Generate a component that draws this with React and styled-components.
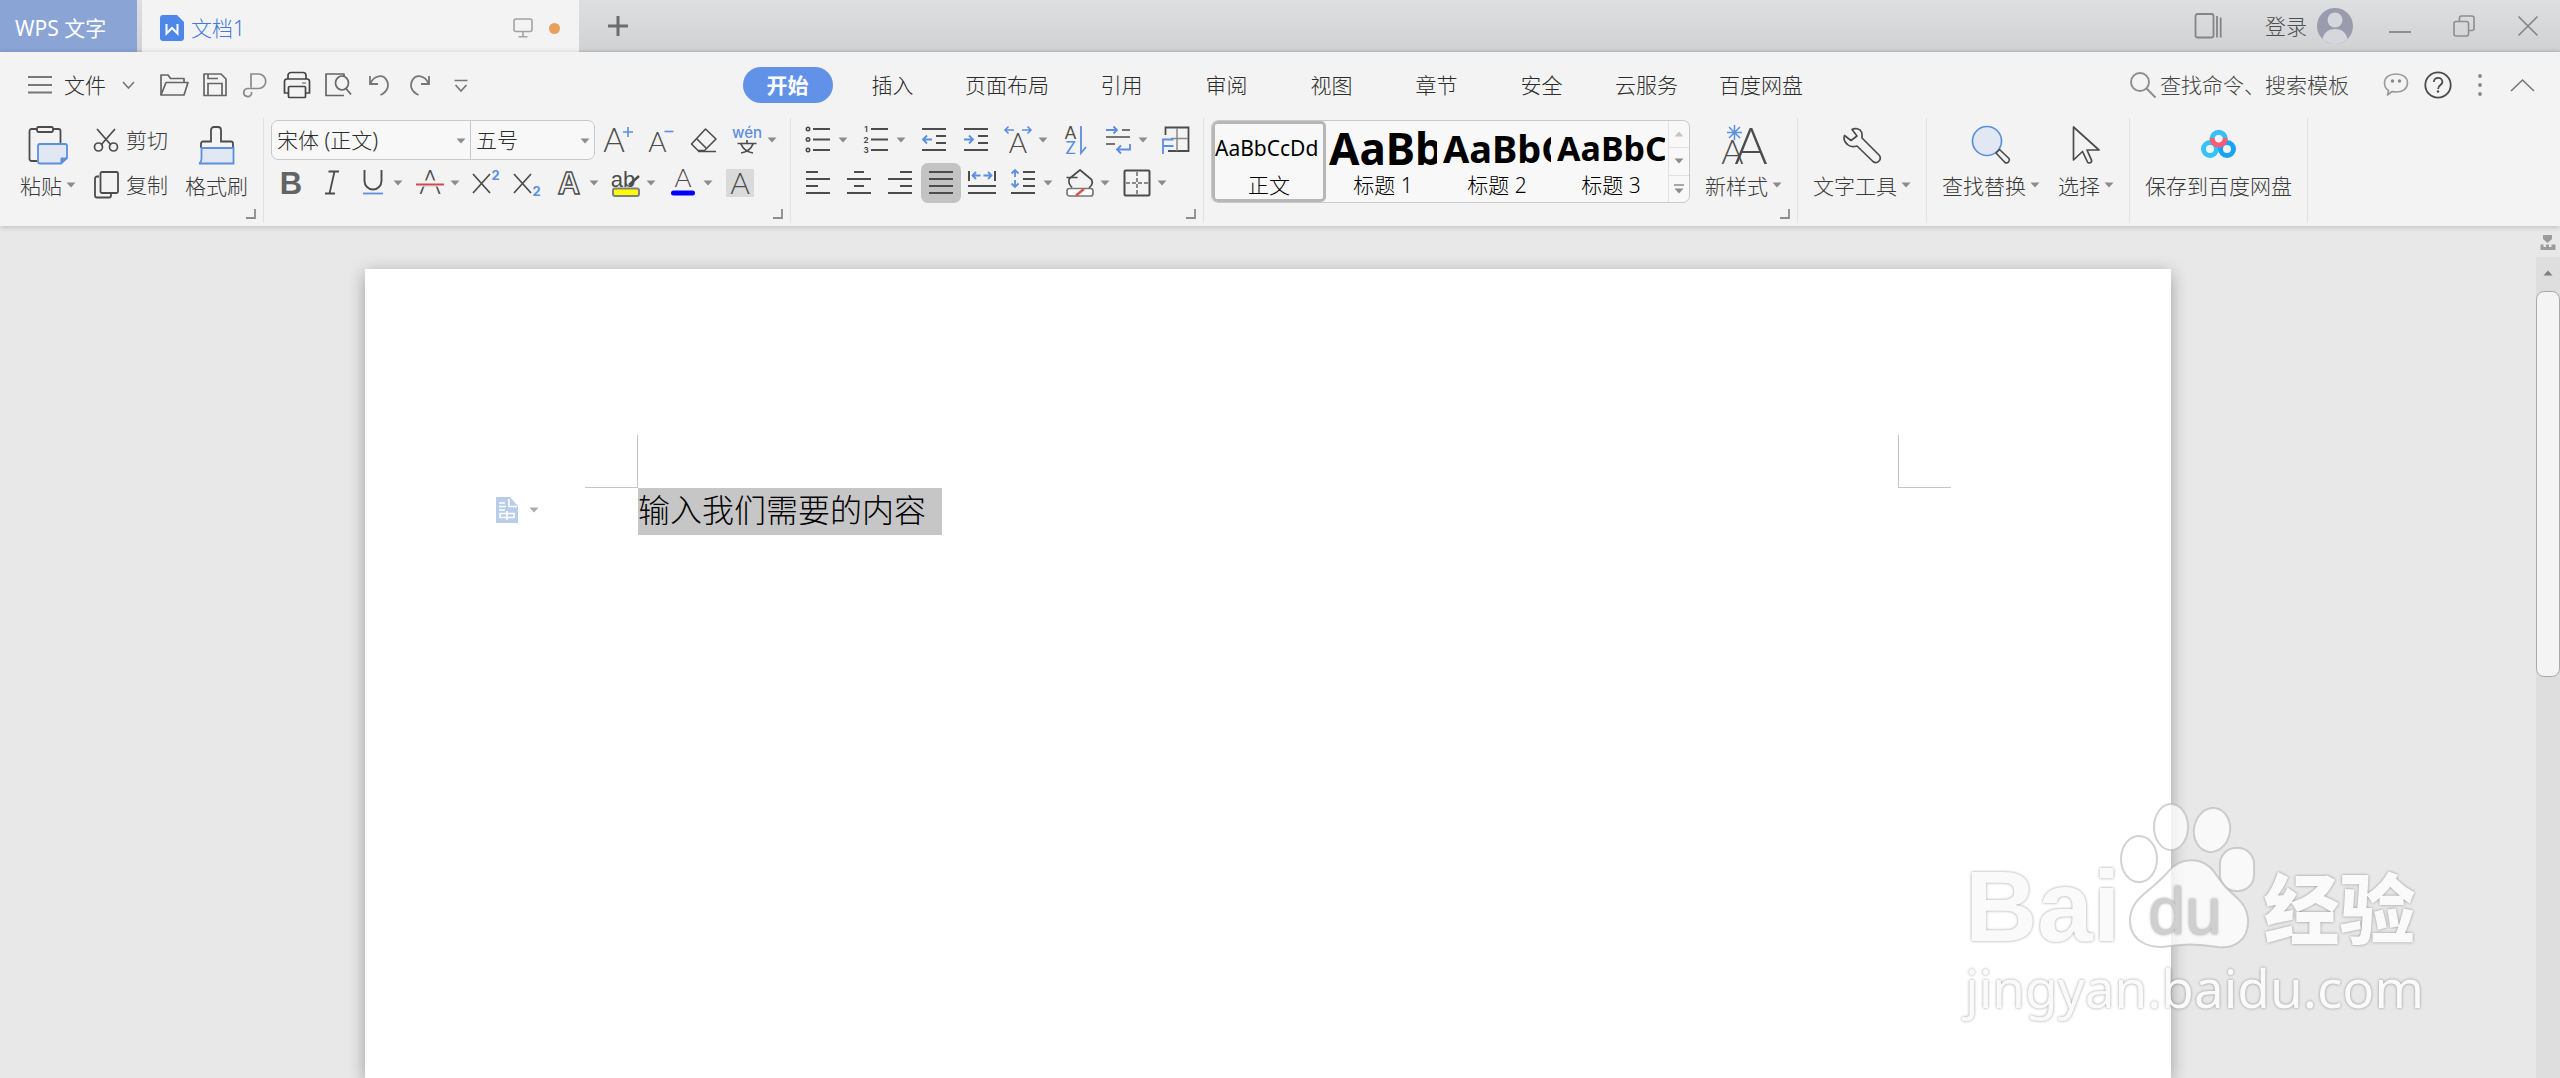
import React, { useState } from "react";
import styled, { createGlobalStyle } from "styled-components";

const ink = "#4c4c4c";
const blue = "#5b8fdf";
const gray = "#8c8c8c";

/* ---------- icons ---------- */

const Icon = ({ w = 28, h = 28, color = ink, sw = 2, children }) => (
    <svg
        width={w}
        height={h}
        viewBox={`0 0 ${w} ${h}`}
        fill="none"
        stroke={color}
        strokeWidth={sw}
        aria-hidden="true"
    >
        {children}
    </svg>
);

const Glyph = ({ x, y, size, fill = ink, weight = 300, family = "Lato", ...rest }) => (
    <text
        x={x}
        y={y}
        fontSize={size}
        fill={fill}
        stroke="none"
        fontWeight={weight}
        fontFamily={`"${family}", "Noto Sans CJK SC", sans-serif`}
        textAnchor="middle"
        {...rest}
    />
);

const Caret = ({ up, color = gray }) => (
    <svg width="10" height="6" viewBox="0 0 10 6" aria-hidden="true">
        <path d={up ? "M0.5 5.5h9L5 0.5z" : "M0.5 0.5h9L5 5.5z"} fill={color} />
    </svg>
);

const DocLogo = () => (
    <svg width="24" height="26" viewBox="0 0 24 26" aria-hidden="true">
        <path d="M3 0h14l7 7v16a3 3 0 0 1-3 3H3a3 3 0 0 1-3-3V3a3 3 0 0 1 3-3z" fill="#4f87e8" />
        <path d="M6.5 9v9.500L12 13l5.500 5.500V9" fill="none" stroke="#fff" strokeWidth="2" />
    </svg>
);

const MonitorIcon = () => (
    <Icon w={20} h={20} color="#a3a3a3" sw={1.6}>
        <rect x="1" y="1" width="18" height="12.500" rx="2" />
        <path d="M10 14v4.500M5.500 18.700h9" />
    </Icon>
);

const PlusIcon = () => (
    <Icon w={22} h={22} color="#6c6c6c" sw={3}>
        <path d="M11 1v20M1 11h20" />
    </Icon>
);

const SidebarIcon = () => (
    <Icon w={28} h={26} color="#858585" sw={1.8}>
        <rect x="1.500" y="1" width="18" height="23.500" rx="2" />
        <path d="M23 3v21.500M26.700 4.500v20" />
    </Icon>
);

const Avatar = () => (
    <svg width="36" height="36" viewBox="0 0 36 36" aria-hidden="true">
        <circle cx="18" cy="18" r="18" fill="#9a9bac" />
        <circle cx="18" cy="12" r="7.500" fill="#d6d7dc" />
        <path d="M5.500 31C7 24 12 21 18 21s11 3 12.500 10A18 18 0 0 1 5.500 31z" fill="#d6d7dc" />
    </svg>
);

const MinimizeIcon = () => (
    <Icon w={22} h={22} color="#8e8e8e">
        <path d="M0 17h22" />
    </Icon>
);

const RestoreIcon = () => (
    <Icon w={22} h={22} color="#8e8e8e" sw={1.6}>
        <rect x="1" y="6.500" width="14.500" height="14.500" rx="2" />
        <path d="M6.500 6.500V3a2 2 0 0 1 2-2H19a2 2 0 0 1 2 2v10.500a2 2 0 0 1-2 2h-3" />
    </Icon>
);

const CloseIcon = () => (
    <Icon w={20} h={20} color="#858585" sw={1.700}>
        <path d="M0.500 0.500l19 19M19.500 0.500l-19 19" />
    </Icon>
);

const MenuIcon = () => (
    <Icon w={24} h={18} color="#777" sw={1.800}>
        <path d="M0 1h24M0 9h24M0 16.500h24" />
    </Icon>
);

const ChevronIcon = ({ w = 13, h = 8, up }) => (
    <Icon w={w} h={h} color="#777" sw={1.600}>
        <path d={up ? `M1 ${h - 1}L${w / 2} 1L${w - 1} ${h - 1}` : `M1 1L${w / 2} ${h - 1}L${w - 1} 1`} />
    </Icon>
);

const OpenIcon = () => (
    <Icon color="#666" sw={1.700}>
        <path d="M1 24V4h7l2.500 3.500H24v4" strokeLinejoin="round" />
        <path d="M1 24L6 11.500h22L24 24z" strokeLinejoin="round" />
    </Icon>
);

const SaveIcon = () => (
    <Icon color="#666" sw={1.700}>
        <path d="M3 3h17l5 5v16.500H3z" strokeLinejoin="round" />
        <path d="M7 24V12.500h14V24M7 3v4.500h10" />
    </Icon>
);

const ExportIcon = () => (
    <Icon color="#8a8a8a" sw={1.700}>
        <path d="M9 16.500V3h7.500a7 7 0 0 1 0 14.500H5.500a4 4 0 1 0 4 5.500v-2" />
    </Icon>
);

const PrintIcon = () => (
    <Icon color="#444" sw={1.700}>
        <path d="M5 8V4.500a3 3 0 0 1 3-3h12a3 3 0 0 1 3 3V8" />
        <path d="M5 22H1.500V10.500a2.500 2.500 0 0 1 2.500-2.500h20a2.500 2.500 0 0 1 2.500 2.500V22H23" />
        <rect x="5.500" y="15.500" width="17" height="11" rx="1" />
        <path d="M19 12h4" stroke="#999" />
    </Icon>
);

const PreviewIcon = () => (
    <Icon color="#666" sw={1.700}>
        <path d="M20 6V3H2v21.500h18" strokeLinejoin="round" />
        <ellipse cx="18" cy="12" rx="6.500" ry="7" />
        <path d="M22 17.500l5 6" />
    </Icon>
);

const UndoIcon = ({ flip }) => (
    <Icon w={24} color="#777" sw={1.800}>
        <path
            d={
                flip
                    ? "M21 5v8h-8M20.500 12.500C17 4 8 3 4.500 9s-.5 12 6 15"
                    : "M3 5v8h8M3.500 12.500C7 4 16 3 19.500 9s.5 12-6 15"
            }
        />
    </Icon>
);

const MoreDownIcon = () => (
    <Icon w={14} h={14} color="#777" sw={1.700}>
        <path d="M0.500 2.500h13M1.500 7L7 13l5.500-6" />
    </Icon>
);

const SearchIcon = () => (
    <Icon w={26} h={28} color="#8c8c8c" sw={1.900}>
        <circle cx="10" cy="11" r="9" />
        <path d="M16.500 17.500l9 9" />
    </Icon>
);

const ChatIcon = () => (
    <Icon w={26} h={26} color="#999" sw={1.600}>
        <path
            d="M5.500 18.500C2.500 16.500 1.500 14 1.500 11 1.500 5.500 6 2 13 2s11.500 3.500 11.500 9-4.500 9-11.500 9c-1.500 0-3-.2-4-.5L4.500 23z"
            strokeLinejoin="round"
        />
        <circle cx="9.500" cy="9" r="1.700" fill="#888" stroke="none" />
        <circle cx="16.500" cy="9" r="1.700" fill="#888" stroke="none" />
    </Icon>
);

const HelpIcon = () => (
    <Icon color="#4a4a4a" sw={1.800}>
        <circle cx="14" cy="14" r="12.700" />
        <path d="M9.800 11c0-5.500 8.600-5.500 8.600 0 0 3.200-4.300 3-4.300 7" />
        <circle cx="14" cy="20.500" r="1.200" fill="#4a4a4a" stroke="none" />
    </Icon>
);

const DotsIcon = () => (
    <Icon w={6} h={24} color="none">
        <g fill="#888">
            <circle cx="3" cy="3" r="1.900" />
            <circle cx="3" cy="12" r="1.900" />
            <circle cx="3" cy="21" r="1.900" />
        </g>
    </Icon>
);

const PasteIcon = () => (
    <Icon w={40} h={40} sw={1.800}>
        <path d="M9 36H3.500a2 2 0 0 1-2-2V6a2 2 0 0 1 2-2H9M25 4h5.500a2 2 0 0 1 2 2v12" />
        <rect x="9" y="2" width="16" height="5" rx="1.500" />
        <path d="M12 19h25a2 2 0 0 1 2 2v12l-6 5.500H12a2 2 0 0 1-2-2V21a2 2 0 0 1 2-2z" fill="#e1e8f4" stroke={blue} />
        <path d="M33 38.500V33h6z" fill={blue} stroke={blue} strokeWidth="1" />
    </Icon>
);

const CutIcon = () => (
    <Icon w={26} h={26} sw={1.700}>
        <path d="M4 2l14 16M22 2L8 18" />
        <circle cx="5.500" cy="20" r="4" />
        <circle cx="20.500" cy="20" r="4" />
    </Icon>
);

const CopyIcon = () => (
    <Icon w={26} h={28} sw={1.800}>
        <rect x="7.500" y="1" width="17.500" height="21" rx="1.500" />
        <path d="M6 5.500H4a2 2 0 0 0-2 2V24.500a2 2 0 0 0 2 2h12a2 2 0 0 0 2-2V23" />
    </Icon>
);

const PainterIcon = () => (
    <Icon w={40} h={40} sw={1.800}>
        <path d="M4 23v-4.500a2 2 0 0 1 2-2h8V5a3 3 0 0 1 3-3h4a3 3 0 0 1 3 3v11.500h10a2 2 0 0 1 2 2V23" />
        <path d="M4.500 23h32v15.500H2c2.500-1 2.500-3 2.500-6z" fill="#e1e8f4" stroke={blue} />
    </Icon>
);

const GrowIcon = () => (
    <Icon w={30}>
        <Glyph x="11" y="26" size="33">A</Glyph>
        <path d="M25 1v10M20 6h10" stroke={blue} strokeWidth="1.600" />
    </Icon>
);

const ShrinkIcon = () => (
    <Icon w={26}>
        <Glyph x="9.500" y="26" size="28">A</Glyph>
        <path d="M16.500 5.500h9" stroke={blue} strokeWidth="1.600" />
    </Icon>
);

const EraserIcon = () => (
    <Icon sw={1.600}>
        <path d="M15.500 3L26 13 14.500 24.500H8L1.500 18z" strokeLinejoin="round" />
        <path d="M6.500 12.500L16 22M8 25.500h18" />
    </Icon>
);

const PinyinIcon = () => (
    <Icon w={30} h={30}>
        <Glyph x="15" y="13" size="15" fill={blue} weight={500} family="Inter">wén</Glyph>
        <path d="M5.500 18.500h19M15 15v3M9 19c2 5 6 8 12 9M21 19c-2 5-6 8-12 9" strokeWidth="1.700" />
    </Icon>
);

const BoldIcon = () => (
    <Icon>
        <Glyph x="14" y="25" size="31" weight={900} fill="#636363" family="Liberation Sans">B</Glyph>
    </Icon>
);

const ItalicIcon = () => (
    <Icon sw={1.800}>
        <path d="M10.500 2.500h10.500M7 24.500h10M16.500 2.500L11.500 24.500" />
    </Icon>
);

const UnderlineIcon = () => (
    <Icon sw={1.900}>
        <path d="M5.500 1v11a8.500 8.500 0 0 0 17 0V1" />
        <path d="M4 24.500h20" stroke={blue} strokeWidth="1.800" />
    </Icon>
);

const StrikeIcon = () => (
    <Icon>
        <Glyph x="14" y="25" size="33">A</Glyph>
        <path d="M0 14.500h28" stroke="#f3f3f3" strokeWidth="6" />
        <path d="M0 15.500h28" stroke="#cf4a4f" />
    </Icon>
);

const ScriptIcon = ({ sub }) => (
    <Icon sw={1.700}>
        <path d="M0 5l17 19M17 5L0 24" />
        <Glyph x="22.500" y={sub ? 27 : 11} size="13" fill={blue} weight={700} family="Inter">2</Glyph>
    </Icon>
);

const EffectIcon = () => (
    <Icon>
        <Glyph x="14" y="25" size="31" weight={700} family="Liberation Sans" fill="#f3f3f3" stroke={ink} strokeWidth="1.400">
            A
        </Glyph>
    </Icon>
);

const HighlightIcon = () => (
    <Icon w={30} h={30}>
        <Glyph x="12" y="19" size="22" weight={400} family="Liberation Sans">ab</Glyph>
        <path d="M18 17l10-9M19 17l3-4" strokeWidth="2.400" />
        <rect x="2" y="20.500" width="26" height="7.500" rx="2" fill="#ffff00" stroke="#808080" />
    </Icon>
);

const ColorIcon = () => (
    <Icon w={28} h={30}>
        <Glyph x="14" y="19" size="26">A</Glyph>
        <path d="M4.500 25h19" stroke="#0000ff" strokeWidth="5" strokeLinecap="round" />
    </Icon>
);

const ShadeIcon = () => (
    <Icon>
        <rect width="28" height="28" rx="1" fill="#dadada" stroke="none" />
        <Glyph x="14" y="25" size="30">A</Glyph>
    </Icon>
);

const BulletsIcon = () => (
    <Icon>
        <path d="M9 3h17M9 13.500h17M9 24h17" />
        <g strokeWidth="1.600">
            <circle cx="4" cy="3" r="1.700" />
            <circle cx="4" cy="13.500" r="1.700" />
            <circle cx="4" cy="24" r="1.700" />
        </g>
    </Icon>
);

const NumbersIcon = () => (
    <Icon>
        <path d="M9 3h17M9 13.500h17M9 24h17" />
        <Glyph x="4" y="6" size="8" weight={700} family="Inter">1</Glyph>
        <Glyph x="4" y="16.500" size="8" weight={700} family="Inter">2</Glyph>
        <Glyph x="4" y="27" size="8" weight={700} family="Inter">3</Glyph>
    </Icon>
);

const IndentIcon = ({ out }) => (
    <Icon>
        <path d="M2 3h24M16 10h10M16 17h10M2 24h24" />
        <path d={out ? "M3 13.500h9M7 9.500l-4 4 4 4" : "M2 13.500h9M7 9.500l4 4-4 4"} stroke={blue} strokeWidth="1.800" />
    </Icon>
);

const ScaleIcon = () => (
    <Icon>
        <Glyph x="14" y="27" size="28">A</Glyph>
        <path d="M1 4h9M4.500 0.500L1 4l3.500 3.500M18 4h9M23.500 0.500L27 4l-3.500 3.500" stroke={blue} strokeWidth="1.600" />
    </Icon>
);

const SortIcon = () => (
    <Icon>
        <Glyph x="8.500" y="13" size="17" weight={400}>A</Glyph>
        <Glyph x="8.500" y="27.500" size="17" weight={400} fill={blue}>Z</Glyph>
        <path d="M19 0v27l5-6" stroke={blue} strokeWidth="1.800" />
    </Icon>
);

const WrapIcon = () => (
    <Icon sw={1.600}>
        <path d="M18 4h8M2 11h24M2 18h9" />
        <path d="M2 4h11M9.500 0.500L13 4l-3.500 3.500M26 18v5.500H13M17 19.500l-4 4 4 4" stroke={blue} strokeWidth="1.800" />
    </Icon>
);

const TableIcon = () => (
    <Icon sw={1.800}>
        <path d="M3.500 9V1.500h23v23.500H6" />
        <path d="M15 2v23M9 12.500h17" stroke="#888" strokeWidth="1.500" />
        <path d="M1 28V13.500h10.500M1 20h10.500" stroke={blue} />
    </Icon>
);

const AlignIcon = ({ lines }) => (
    <Icon>
        <path d={lines.map(([from, to], i) => `M${from} ${3 + i * 7}H${to}`).join("")} />
    </Icon>
);

const DistributeIcon = () => (
    <Icon>
        <path d="M1 2v10M27 2v10M0 17h28M0 24h28" />
        <path d="M4.500 6.500h8M8 3L4.500 6.500 8 10M15.500 6.500h8M20 3l3.500 3.500L20 10" stroke={blue} strokeWidth="1.800" />
    </Icon>
);

const SpacingIcon = () => (
    <Icon>
        <path d="M14 3h12M14 10h12M14 17h12M2 24h24" />
        <path d="M6 1v7M2.500 4.500L6 1l3.500 3.500M6 11v7M2.500 14.500L6 18l3.500-3.500" stroke={blue} strokeWidth="1.800" />
    </Icon>
);

const BucketIcon = () => (
    <Icon sw={1.700}>
        <path d="M0.500 8.500h11M6 18.500c-3-3-4-6-2.500-9L14 1l11.500 9.500c1.500 3 .5 6-2.500 8.500" strokeLinejoin="round" />
        <rect x="1" y="19.500" width="26" height="7.500" rx="2.500" fill="#fff" stroke="#777" />
        <path d="M10 26.500l8-6.500" stroke="#d9534f" strokeWidth="2.400" />
    </Icon>
);

const BorderIcon = () => (
    <Icon>
        <rect x="1.500" y="1.500" width="25" height="25" rx="1" />
        <path d="M14 3v22M3 14h22" stroke="#8a8a8a" strokeDasharray="4 2" />
    </Icon>
);

const NewStyleIcon = () => (
    <Icon w={44} h={40}>
        <Glyph x="10.500" y="39" size="34">A</Glyph>
        <Glyph x="29" y="39" size="51">A</Glyph>
        <path
            d="M12.500 0v15M5 7.500h15M7 2l11 11M18 2L7 13"
            stroke={blue}
            strokeWidth="1.500"
        />
    </Icon>
);

const WrenchIcon = () => (
    <Icon w={40} h={40} sw={1.700}>
        <path
            d="M10 4.500c3-1.800 8-1 9.500 2.500 1 2.500.5 4 .5 6l17 17c3.500 4-1.500 10-6 6.500L15 21c-3 1-7 1-9.500-1.500C1.500 16 1.500 13 2.500 10.500l6.500 5 6-4.500z"
            strokeLinejoin="round"
        />
    </Icon>
);

const FindIcon = () => (
    <Icon w={40} h={40} sw={1.700}>
        <circle cx="16" cy="16" r="14.500" fill="#e1e8f4" stroke={blue} />
        <path d="M25 28l3.500-3.500L38 33.500c1.500 2.500-1.500 5.500-4 4z" strokeLinejoin="round" />
    </Icon>
);

const CursorIcon = () => (
    <Icon w={30} h={40} sw={1.700}>
        <path
            d="M2.500 2v33l9-8.500 5 10.500c1 2 5 .5 4-1.800L16 25h12z"
            strokeLinejoin="round"
        />
    </Icon>
);

const NetdiskIcon = () => (
    <Icon w={38} h={40} sw={5}>
        <circle cx="10" cy="24" r="6.500" stroke="#35c3f6" />
        <circle cx="27" cy="24" r="6.500" stroke="#16a4f8" />
        <path d="M12 14a6.700 6.700 0 0 1 13.400 0" stroke="#36c0f5" />
        <path d="M12 13a6.700 7 0 0 0 13.400 0" stroke="#fb5c76" />
    </Icon>
);

const LauncherIcon = () => (
    <Icon w={10} h={10} color={gray} sw={1.800}>
        <path d="M9 0v9H0" />
    </Icon>
);

const PasteHintIcon = () => (
    <svg width="22" height="26" viewBox="0 0 22 26" aria-hidden="true">
        <path d="M0 0h14l8 9v17H0z" fill="#b9cdea" />
        <path d="M13 2v7.500h8M3 6h6M3 9.500h7M3 13h6M4 16.500h14v4H4zM11 14v9" fill="none" stroke="#fff" strokeWidth="1.600" />
    </svg>
);

const RulerIcon = () => (
    <svg width="16" height="16" viewBox="0 0 16 16" aria-hidden="true">
        <path d="M3 0h9v4L7.500 8 3 4z" fill="#9c9c9c" />
        <path d="M0.500 9.500h3v2.500h2.500V9.500h3v2.500h2.500V9.500h4V15h-15z" fill="#9c9c9c" />
    </svg>
);

/* ---------- data ---------- */

const quickTools = [
    ["打开", <OpenIcon />],
    ["保存", <SaveIcon />],
    ["输出为PDF", <ExportIcon />],
    ["打印", <PrintIcon />],
    ["打印预览", <PreviewIcon />],
    ["撤销", <UndoIcon />],
    ["恢复", <UndoIcon flip />],
    ["自定义快速访问工具栏", <MoreDownIcon />],
];

const tabs = ["开始", "插入", "页面布局", "引用", "审阅", "视图", "章节", "安全", "云服务", "百度网盘"];

const fontSizeTools = [
    ["增大字号", <GrowIcon />],
    ["减小字号", <ShrinkIcon />],
    ["清除格式", <EraserIcon />],
    ["拼音指南", <PinyinIcon />, true],
];

const fontTools = [
    ["加粗", <BoldIcon />],
    ["倾斜", <ItalicIcon />],
    ["下划线", <UnderlineIcon />, true],
    ["删除线", <StrikeIcon />, true],
    ["上标", <ScriptIcon />],
    ["下标", <ScriptIcon sub />],
    ["文字效果", <EffectIcon />, true],
    ["突出显示", <HighlightIcon />, true],
    ["字体颜色", <ColorIcon />, true],
    ["字符底纹", <ShadeIcon />],
];

const listTools = [
    ["项目符号", <BulletsIcon />, true],
    ["编号", <NumbersIcon />, true],
    ["减少缩进量", <IndentIcon out />],
    ["增加缩进量", <IndentIcon />],
    ["中文版式", <ScaleIcon />, true],
    ["排序", <SortIcon />],
    ["显示编辑标记", <WrapIcon />, true],
    ["制表位", <TableIcon />],
];

const alignTools = [
    ["左对齐", <AlignIcon lines={[[2, 14], [2, 26], [2, 14], [2, 26]]} />],
    ["居中", <AlignIcon lines={[[9, 19], [2, 26], [9, 19], [2, 26]]} />],
    ["右对齐", <AlignIcon lines={[[14, 26], [2, 26], [14, 26], [2, 26]]} />],
    ["两端对齐", <AlignIcon lines={[[2, 26], [2, 26], [2, 26], [2, 26]]} />, false, true],
    ["分散对齐", <DistributeIcon />],
    ["行距", <SpacingIcon />, true],
    ["底纹颜色", <BucketIcon />, true],
    ["边框", <BorderIcon />, true],
];

const styleSamples = [
    { name: "正文", sample: "AaBbCcDd", size: 21 },
    { name: "标题 1", sample: "AaBb", size: 44, bold: true },
    { name: "标题 2", sample: "AaBbC", size: 38, bold: true },
    { name: "标题 3", sample: "AaBbC", size: 34, bold: true },
];

/* ---------- components ---------- */

function ToolRow({ tools, gap }) {
    return (
        <Row $gap={gap}>
            {tools.map(([name, icon, hasMenu, active]) => (
                <Tool key={name} aria-label={name} $active={active}>
                    <ToolIcon>{icon}</ToolIcon>
                    {hasMenu && (
                        <ToolMenu>
                            <Caret />
                        </ToolMenu>
                    )}
                </Tool>
            ))}
        </Row>
    );
}

function BigTool({ icon, label, hasMenu }) {
    return (
        <BigButton>
            {icon}
            <BigLabel>
                {label}
                {hasMenu && <Caret />}
            </BigLabel>
        </BigButton>
    );
}

function TitleBar() {
    return (
        <Title>
            <HomeTab>WPS 文字</HomeTab>
            <DocTab>
                <DocLogo />
                <DocName>文档1</DocName>
                <MonitorIcon />
                <UnsavedDot />
            </DocTab>
            <NewTab aria-label="新建">
                <PlusIcon />
            </NewTab>
            <WindowTools>
                <IconButton aria-label="侧栏">
                    <SidebarIcon />
                </IconButton>
                <Login>
                    登录
                    <Avatar />
                </Login>
                <WindowButton aria-label="最小化">
                    <MinimizeIcon />
                </WindowButton>
                <WindowButton aria-label="还原">
                    <RestoreIcon />
                </WindowButton>
                <WindowButton aria-label="关闭">
                    <CloseIcon />
                </WindowButton>
            </WindowTools>
        </Title>
    );
}

function MenuBar() {
    const [activeTab, setActiveTab] = useState("开始");

    return (
        <Menu>
            <Quick>
                <FileButton>
                    <MenuIcon />
                    <span>文件</span>
                    <ChevronIcon />
                </FileButton>
                <Row $gap={1}>
                    {quickTools.map(([name, icon]) => (
                        <IconButton key={name} aria-label={name}>
                            {icon}
                        </IconButton>
                    ))}
                </Row>
            </Quick>
            <Tabs>
                {tabs.map((tab) => (
                    <TabSlot key={tab} $wide={tab.length > 3}>
                        <Tab $active={tab === activeTab} onClick={() => setActiveTab(tab)}>
                            {tab}
                        </Tab>
                    </TabSlot>
                ))}
            </Tabs>
            <MenuRight>
                <Search>
                    <SearchIcon />
                    <input type="text" aria-label="查找" placeholder="查找命令、搜索模板" />
                </Search>
                <Row $gap={2}>
                    <IconButton aria-label="反馈">
                        <ChatIcon />
                    </IconButton>
                    <IconButton aria-label="帮助">
                        <HelpIcon />
                    </IconButton>
                    <IconButton aria-label="更多">
                        <DotsIcon />
                    </IconButton>
                    <IconButton aria-label="收起功能区">
                        <ChevronIcon w={25} h={13} up />
                    </IconButton>
                </Row>
            </MenuRight>
        </Menu>
    );
}

function Ribbon() {
    const [style, setStyle] = useState("正文");

    return (
        <RibbonBar>
            <Group $left={20} $right={15} $gap={17}>
                <BigTool icon={<PasteIcon />} label="粘贴" hasMenu />
                <Stack $gap={5}>
                    <SmallButton>
                        <CutIcon />
                        剪切
                    </SmallButton>
                    <SmallButton>
                        <CopyIcon />
                        复制
                    </SmallButton>
                </Stack>
                <BigTool icon={<PainterIcon />} label="格式刷" />
                <Launcher aria-label="剪贴板">
                    <LauncherIcon />
                </Launcher>
            </Group>

            <Group $left={7} $right={7}>
                <Stack $gap={3}>
                    <Row $gap={3}>
                        <Combo>
                            <Field $width={198}>
                                <select aria-label="字体" defaultValue="宋体 (正文)">
                                    <option>宋体 (正文)</option>
                                </select>
                                <Caret />
                            </Field>
                            <Field $width={124}>
                                <select aria-label="字号" defaultValue="五号">
                                    <option>五号</option>
                                </select>
                                <Caret />
                            </Field>
                        </Combo>
                        <ToolRow tools={fontSizeTools} gap={3} />
                    </Row>
                    <ToolRow tools={fontTools} gap={1} />
                </Stack>
                <Launcher aria-label="字体设置">
                    <LauncherIcon />
                </Launcher>
            </Group>

            <Group $left={7} $right={7}>
                <Stack $gap={3}>
                    <ToolRow tools={listTools} gap={2} />
                    <ToolRow tools={alignTools} gap={1} />
                </Stack>
                <Launcher aria-label="段落设置">
                    <LauncherIcon />
                </Launcher>
            </Group>

            <Group $left={7} $right={15} $gap={15}>
                <Gallery>
                    {styleSamples.map((item) => (
                        <StyleCard
                            key={item.name}
                            $active={item.name === style}
                            onClick={() => setStyle(item.name)}
                        >
                            <Sample $size={item.size} $bold={item.bold}>
                                {item.sample}
                            </Sample>
                            <StyleName>{item.name}</StyleName>
                        </StyleCard>
                    ))}
                    <GalleryScroll>
                        <button aria-label="上一行">
                            <Caret up color="#c4c4c4" />
                        </button>
                        <button aria-label="下一行">
                            <Caret />
                        </button>
                        <button aria-label="更多样式">
                            <Icon w={10} h={10} color={gray} sw={1.600}>
                                <path d="M0 1h10" />
                                <path d="M0.500 4.500h9L5 9.500z" fill={gray} stroke="none" />
                            </Icon>
                        </button>
                    </GalleryScroll>
                </Gallery>
                <BigTool icon={<NewStyleIcon />} label="新样式" hasMenu />
                <Launcher aria-label="样式设置">
                    <LauncherIcon />
                </Launcher>
            </Group>

            <Group $left={15} $right={15}>
                <BigTool icon={<WrenchIcon />} label="文字工具" hasMenu />
            </Group>

            <Group $left={15} $right={15} $gap={18}>
                <BigTool icon={<FindIcon />} label="查找替换" hasMenu />
                <BigTool icon={<CursorIcon />} label="选择" hasMenu />
            </Group>

            <Group $left={15} $right={15}>
                <BigTool icon={<NetdiskIcon />} label="保存到百度网盘" />
            </Group>
        </RibbonBar>
    );
}

function Watermark() {
    return (
        <Mark>
            <MarkRow>
                <MarkLatin>Bai</MarkLatin>
                <svg width="140" height="150" viewBox="0 0 140 150" aria-hidden="true">
                    <g fill="#fff" fillOpacity="0.75" stroke="#b4b4b4" strokeOpacity="0.6" strokeWidth="2">
                        <ellipse cx="18" cy="57" rx="18" ry="23" />
                        <ellipse cx="50" cy="25" rx="17" ry="23" />
                        <ellipse cx="91" cy="28" rx="18" ry="22" transform="rotate(10 91 28)" />
                        <rect x="99" y="46" width="34" height="43" rx="16" />
                        <path d="M46 71c13-17 36-17 48 0 8 11 10 14 20 23 8 7 13 14 13 26 0 18-14 27-30 25-17-3-30-4-48-1-20 4-40-5-40-25 0-13 6-20 14-27 10-9 15-12 23-21z" />
                    </g>
                    <Glyph x="64" y="132" size="66" weight={400} family="Liberation Sans" fill="#cfcfcf">
                        du
                    </Glyph>
                </svg>
                <MarkHan>经验</MarkHan>
            </MarkRow>
            <MarkUrl>jingyan.baidu.com</MarkUrl>
        </Mark>
    );
}

function App() {
    return (
        <Shell>
            <GlobalStyle />
            <TitleBar />
            <Chrome>
                <MenuBar />
                <Ribbon />
            </Chrome>
            <Workspace>
                <Canvas>
                    <Page>
                        <CropMarks>
                            <CropMark />
                            <CropMark $right />
                        </CropMarks>
                        <Line>
                            <PasteHint aria-label="粘贴选项">
                                <PasteHintIcon />
                                <Caret color="#ababab" />
                            </PasteHint>
                            <Selected>输入我们需要的内容</Selected>
                        </Line>
                    </Page>
                </Canvas>
                <ScrollBar>
                    <ScrollRuler>
                        <RulerIcon />
                    </ScrollRuler>
                    <ScrollUp aria-label="向上滚动">
                        <Caret up color="#808080" />
                    </ScrollUp>
                    <ScrollTrack>
                        <ScrollThumb />
                    </ScrollTrack>
                </ScrollBar>
                <Watermark />
            </Workspace>
        </Shell>
    );
}

/* ---------- styles ---------- */

const GlobalStyle = createGlobalStyle`
    * {
        box-sizing: border-box;
    }

    body {
        margin: 0;
        font-family: "Noto Sans", "Noto Sans CJK SC", sans-serif;
        font-size: 21px;
        font-weight: 300;
        line-height: 26px;
        color: #2c2c2c;
    }

    button, input, select {
        margin: 0;
        padding: 0;
        border: 0;
        background: none;
        font: inherit;
        color: inherit;
        white-space: nowrap;
    }

    svg {
        flex: none;
        display: block;
        overflow: visible;
    }
`;

const Shell = styled.div`
    display: flex;
    flex-direction: column;
    height: 100vh;
    overflow: hidden;
    background: #e8e8e8;
`;

const Title = styled.header`
    display: flex;
    flex: none;
    height: 52px;
    background: linear-gradient(#dedfe1, #d1d2d4 96%, #c0c1c3);
`;

const HomeTab = styled.button`
    width: 137px;
    margin-right: 5px;
    padding-left: 15px;
    padding-top: 4px;
    text-align: left;
    font-weight: 400;
    color: #fff;
    background: #8aa4d5;
`;

const DocTab = styled.div`
    display: flex;
    align-items: center;
    width: 437px;
    padding: 4px 19px 0 18px;
    background: #f3f3f3;
`;

const DocName = styled.span`
    flex: 1;
    margin-left: 7px;
    color: #4179e0;
`;

const UnsavedDot = styled.span`
    width: 11px;
    height: 11px;
    margin-left: 16px;
    border-radius: 50%;
    background: #e8a05a;
`;

const NewTab = styled.button`
    display: flex;
    align-items: center;
    justify-content: center;
    width: 78px;
`;

const WindowTools = styled.div`
    display: flex;
    align-items: center;
    margin-left: auto;
    color: #505050;
`;

const IconButton = styled.button`
    display: flex;
    align-items: center;
    justify-content: center;
    width: 40px;
    height: 40px;
`;

const Login = styled.button`
    display: flex;
    align-items: center;
    gap: 10px;
    margin: 0 15px 0 37px;
`;

const WindowButton = styled(IconButton)`
    width: 64px;
`;

const Chrome = styled.div`
    position: relative;
    flex: none;
    background: #f3f3f3;
    box-shadow: 0 1px 6px rgba(0, 0, 0, 0.2);
`;

const Menu = styled.div`
    display: flex;
    align-items: center;
    height: 66px;
`;

const Quick = styled.div`
    display: flex;
    align-items: center;
    gap: 19px;
    min-width: 735px;
    padding-left: 28px;
`;

const FileButton = styled.button`
    display: flex;
    align-items: center;

    span {
        margin: 0 16px 0 12px;
    }
`;

const Row = styled.div`
    display: flex;
    align-items: center;
    gap: ${(props) => props.$gap}px;
`;

const Stack = styled.div`
    display: flex;
    flex-direction: column;
    gap: ${(props) => props.$gap}px;
    padding-top: 2px;
`;

const Tabs = styled.nav`
    display: flex;
`;

const TabSlot = styled.div`
    display: flex;
    justify-content: center;
    width: ${(props) => (props.$wide ? 124 : 105)}px;
`;

const Tab = styled.button`
    height: 36px;
    padding: 0 ${(props) => (props.$active ? 24 : 8)}px;
    border-radius: 18px;
    font-weight: ${(props) => (props.$active ? 700 : 300)};
    color: ${(props) => (props.$active ? "#fff" : "inherit")};
    background: ${(props) => (props.$active ? "#6192e8" : "none")};
`;

const MenuRight = styled.div`
    display: flex;
    align-items: center;
    margin-left: auto;
    padding-right: 18px;
`;

const Search = styled.label`
    display: flex;
    align-items: center;
    gap: 4px;

    input {
        width: 216px;
        outline: none;
    }

    input::placeholder {
        color: #444;
        opacity: 1;
    }
`;

const RibbonBar = styled.div`
    display: flex;
    height: 108px;
    padding-bottom: 3px;
`;

const Group = styled.section`
    position: relative;
    display: flex;
    align-items: flex-start;
    gap: ${(props) => props.$gap || 0}px;
    padding-left: ${(props) => props.$left}px;
    padding-right: ${(props) => props.$right}px;
    border-right: 1px solid #e2e2e2;
`;

const Launcher = styled.button`
    position: absolute;
    right: 7px;
    bottom: 4px;
`;

const BigButton = styled.button`
    display: flex;
    flex-direction: column;
    align-items: center;
    gap: 8px;
    padding-top: 7px;
    color: #3a3a3a;
`;

const BigLabel = styled.span`
    display: flex;
    gap: 4px;

    svg {
        margin-top: 9px;
    }
`;

const SmallButton = styled.button`
    display: flex;
    align-items: center;
    gap: 7px;
    height: 40px;
    color: #3a3a3a;
`;

const Tool = styled.button`
    display: flex;
    align-items: center;
    height: 40px;
    border-radius: 7px;
    background: ${(props) => (props.$active ? "#c3c3c3" : "none")};
`;

const ToolIcon = styled.span`
    display: flex;
    justify-content: center;
    width: 40px;
`;

const ToolMenu = styled.span`
    width: 16px;
`;

const Combo = styled.div`
    display: flex;
    height: 40px;
    border: 1px solid #c9c9c9;
    border-radius: 7px;
    background: #f8f8f8;
`;

const Field = styled.div`
    position: relative;
    width: ${(props) => props.$width}px;

    & + & {
        border-left: 1px solid #c9c9c9;
    }

    select {
        width: 100%;
        height: 100%;
        padding-left: 5px;
        appearance: none;
        outline: none;
    }

    svg {
        position: absolute;
        right: 4px;
        top: 17px;
        pointer-events: none;
    }
`;

const Gallery = styled.div`
    display: flex;
    width: 479px;
    height: 83px;
    margin-top: 2px;
    border: 1px solid #c9c9c9;
    border-radius: 7px;
    background: #f8f8f8;
    overflow: hidden;
`;

const StyleCard = styled.button`
    display: flex;
    flex-direction: column;
    flex: 1;
    min-width: 0;
    border: 3px solid ${(props) => (props.$active ? "#b7b7b7" : "transparent")};
    border-radius: 5px;
    color: #000;
`;

const Sample = styled.span`
    width: 100%;
    height: 48px;
    line-height: 48px;
    overflow: hidden;
    text-align: left;
    font-size: ${(props) => props.$size}px;
    font-weight: ${(props) => (props.$bold ? 700 : 400)};
`;

const StyleName = styled.span`
    width: 100%;
    text-align: center;
`;

const GalleryScroll = styled.div`
    display: flex;
    flex-direction: column;
    width: 21px;
    border-left: 1px solid #e2e2e2;

    button {
        display: flex;
        flex: 1;
        align-items: center;
        justify-content: center;
    }

    button + button {
        border-top: 1px solid #dfe3e8;
    }
`;

const Workspace = styled.main`
    position: relative;
    display: flex;
    flex: 1;
    min-height: 0;
    overflow: hidden;
`;

const Canvas = styled.div`
    flex: 1;
    padding-top: 43px;
`;

const Page = styled.article`
    max-width: 1806px;
    height: 100%;
    margin: 0 auto;
    padding-top: 166px;
    background: #fff;
    box-shadow: 0 4px 16px rgba(0, 0, 0, 0.32);
`;

const CropMarks = styled.div`
    display: flex;
    justify-content: space-between;
    padding: 0 220px;
`;

const CropMark = styled.span`
    width: 53px;
    height: 53px;
    border-bottom: 1px solid #c4c4c4;
    border-${(props) => (props.$right ? "left" : "right")}: 1px solid #c4c4c4;
`;

const Line = styled.div`
    display: flex;
    padding-left: 131px;
`;

const PasteHint = styled.button`
    display: flex;
    align-items: center;
    gap: 11px;
    width: 142px;
    height: 44px;
`;

const Selected = styled.p`
    margin: 0;
    padding: 0 16px 3px 0;
    font-size: 32px;
    line-height: 44px;
    color: #000;
    background: #c6c6c6;
`;

const ScrollBar = styled.aside`
    display: flex;
    flex-direction: column;
    width: 24px;
`;

const ScrollRuler = styled.div`
    height: 31px;
    padding: 9px 0 0 4px;
`;

const ScrollUp = styled.button`
    display: flex;
    align-items: center;
    justify-content: center;
    height: 34px;
    padding-bottom: 2px;
    background: #dedede;
`;

const ScrollTrack = styled.div`
    flex: 1;
    background: #dedede;
`;

const ScrollThumb = styled.div`
    height: 49%;
    border: 1px solid #a9a9a9;
    border-radius: 8px;
    background: #f4f4f4;
`;

const Mark = styled.div`
    position: absolute;
    right: 136px;
    bottom: 54px;
    color: #fafafa;
    text-shadow: 0 0 3px rgba(0, 0, 0, 0.4);
    pointer-events: none;
`;

const MarkRow = styled.div`
    display: flex;
    align-items: flex-end;
`;

const MarkLatin = styled.span`
    font: 700 100px/92px "Liberation Sans", sans-serif;
`;

const MarkHan = styled.span`
    margin-left: 3px;
    font-size: 76px;
    line-height: 86px;
    font-weight: 900;
`;

const MarkUrl = styled.div`
    font-size: 53px;
    line-height: 72px;
    font-weight: 400;
`;

export default App;
